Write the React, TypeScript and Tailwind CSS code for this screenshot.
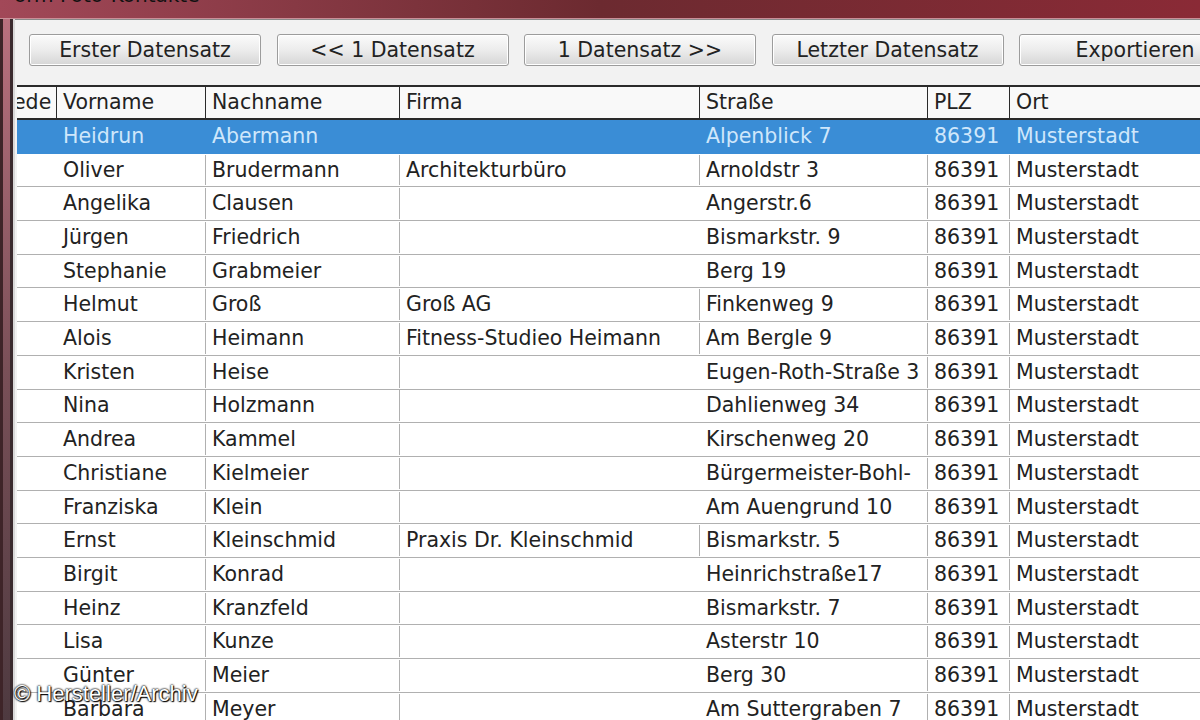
import React from 'react';

type Row = {
  vorname: string;
  nachname: string;
  firma: string;
  strasse: string;
  plz: string;
  ort: string;
};

const rows: Row[] = [
  { vorname: 'Heidrun', nachname: 'Abermann', firma: '', strasse: 'Alpenblick 7', plz: '86391', ort: 'Musterstadt' },
  { vorname: 'Oliver', nachname: 'Brudermann', firma: 'Architekturbüro', strasse: 'Arnoldstr 3', plz: '86391', ort: 'Musterstadt' },
  { vorname: 'Angelika', nachname: 'Clausen', firma: '', strasse: 'Angerstr.6', plz: '86391', ort: 'Musterstadt' },
  { vorname: 'Jürgen', nachname: 'Friedrich', firma: '', strasse: 'Bismarkstr. 9', plz: '86391', ort: 'Musterstadt' },
  { vorname: 'Stephanie', nachname: 'Grabmeier', firma: '', strasse: 'Berg 19', plz: '86391', ort: 'Musterstadt' },
  { vorname: 'Helmut', nachname: 'Groß', firma: 'Groß AG', strasse: 'Finkenweg 9', plz: '86391', ort: 'Musterstadt' },
  { vorname: 'Alois', nachname: 'Heimann', firma: 'Fitness-Studieo Heimann', strasse: 'Am Bergle 9', plz: '86391', ort: 'Musterstadt' },
  { vorname: 'Kristen', nachname: 'Heise', firma: '', strasse: 'Eugen-Roth-Straße 3', plz: '86391', ort: 'Musterstadt' },
  { vorname: 'Nina', nachname: 'Holzmann', firma: '', strasse: 'Dahlienweg 34', plz: '86391', ort: 'Musterstadt' },
  { vorname: 'Andrea', nachname: 'Kammel', firma: '', strasse: 'Kirschenweg 20', plz: '86391', ort: 'Musterstadt' },
  { vorname: 'Christiane', nachname: 'Kielmeier', firma: '', strasse: 'Bürgermeister-Bohl-', plz: '86391', ort: 'Musterstadt' },
  { vorname: 'Franziska', nachname: 'Klein', firma: '', strasse: 'Am Auengrund 10', plz: '86391', ort: 'Musterstadt' },
  { vorname: 'Ernst', nachname: 'Kleinschmid', firma: 'Praxis Dr. Kleinschmid', strasse: 'Bismarkstr. 5', plz: '86391', ort: 'Musterstadt' },
  { vorname: 'Birgit', nachname: 'Konrad', firma: '', strasse: 'Heinrichstraße17', plz: '86391', ort: 'Musterstadt' },
  { vorname: 'Heinz', nachname: 'Kranzfeld', firma: '', strasse: 'Bismarkstr. 7', plz: '86391', ort: 'Musterstadt' },
  { vorname: 'Lisa', nachname: 'Kunze', firma: '', strasse: 'Asterstr 10', plz: '86391', ort: 'Musterstadt' },
  { vorname: 'Günter', nachname: 'Meier', firma: '', strasse: 'Berg 30', plz: '86391', ort: 'Musterstadt' },
  { vorname: 'Barbara', nachname: 'Meyer', firma: '', strasse: 'Am Suttergraben 7', plz: '86391', ort: 'Musterstadt' },
];

const buttons = ['Erster Datensatz', '<< 1 Datensatz', '1 Datensatz >>', 'Letzter Datensatz', 'Exportieren'];

function NavButton({ label }: { label: string }) {
  return (
    <button className="h-[32px] w-[232px] shrink-0 rounded-[3px] border border-[#9c9c9c] bg-gradient-to-b from-[#fbfbfb] via-[#ececec] to-[#d6d6d6] text-[#222] shadow-[inset_0_0_0_1px_#fff]">
      {label}
    </button>
  );
}

function Cell({ w, children, head, sel }: { w: string; children?: React.ReactNode; head?: boolean; sel?: boolean }) {
  const line = head ? 'border-[#2a2a2a]' : sel ? 'border-[#3a8dd6]' : 'border-[#b0b0b0]';
  return (
    <div className={`${w} shrink-0 overflow-hidden whitespace-nowrap border-r pl-[6px] ${line}`}>
      {children}
    </div>
  );
}

export default function App() {
  return (
    <div
      className="relative flex h-[720px] w-[1200px] flex-col overflow-hidden bg-[#6a2c32] text-[20.5px] text-[#222]"
      style={{ fontFamily: '"DejaVu Sans", Verdana, sans-serif' }}
    >
      {/* title bar */}
      <div className="h-[19px] shrink-0 overflow-hidden border-b border-[#c98f98] bg-gradient-to-r from-[#a24858] via-[#6c2a30] to-[#8a2a36]">
        <div className="mt-[-20px] pl-[14px] text-[20px] text-[#111]">orm Foto-Kontakte</div>
      </div>

      <div className="flex min-h-0 flex-1">
        {/* left frame */}
        <div className="flex w-[15px] shrink-0">
          <div className="w-[3px] bg-[#3e2428]" />
          <div className="w-[7px] bg-gradient-to-b from-[#b9707e] via-[#7a5058] to-[#4e3a40]" />
          <div className="w-[3px] bg-[#3a2a2e]" />
          <div className="w-[2px] bg-[#d8d8d8]" />
        </div>

        {/* client area */}
        <div className="flex min-w-0 flex-1 flex-col border-t border-[#8a8a8a] bg-[#f2f2f2]">
          <div className="flex gap-[15.5px] pl-[14px] pt-[14px] pb-[19px]">
            {buttons.map((b) => (
              <NavButton key={b} label={b} />
            ))}
          </div>

          <div className="ml-[2px] flex-1 bg-white">
            {/* header */}
            <div className="flex h-[35px] items-center border-y-2 border-[#2a2a2a] bg-[#f9f9f9]">
              <Cell w="w-[40px]" head>
                <span className="ml-[-10px]">ede</span>
              </Cell>
              <Cell w="w-[149px]" head>Vorname</Cell>
              <Cell w="w-[194px]" head>Nachname</Cell>
              <Cell w="w-[300px]" head>Firma</Cell>
              <Cell w="w-[228px]" head>Straße</Cell>
              <Cell w="w-[82px]" head>PLZ</Cell>
              <div className="pl-[6px]">Ort</div>
            </div>

            {rows.map((r, i) => {
              const sel = i === 0;
              return (
                <div
                  key={r.vorname}
                  className={`flex h-[33.7px] items-center border-b ${
                    sel ? 'border-[#3a8dd6] bg-[#3a8dd6] text-[#cfe7fb]' : 'border-[#b0b0b0] bg-white'
                  }`}
                >
                  <Cell w="w-[40px]" sel={sel} />
                  <Cell w="w-[149px]" sel={sel}>{r.vorname}</Cell>
                  <Cell w="w-[194px]" sel={sel}>{r.nachname}</Cell>
                  <Cell w="w-[300px]" sel={sel}>{r.firma}</Cell>
                  <Cell w="w-[228px]" sel={sel}>{r.strasse}</Cell>
                  <Cell w="w-[82px]" sel={sel}>{r.plz}</Cell>
                  <div className="pl-[6px]">{r.ort}</div>
                </div>
              );
            })}
          </div>
        </div>
      </div>

      {/* watermark */}
      <div
        className="absolute left-[14px] top-[677px] text-[22px] text-white"
        style={{
          fontFamily: '"Liberation Sans", Arial, sans-serif',
          textShadow: '0 0 2px #000, 0 0 2px #000, 1px 1px 1px #000',
        }}
      >
        © Hersteller/Archiv
      </div>
    </div>
  );
}
